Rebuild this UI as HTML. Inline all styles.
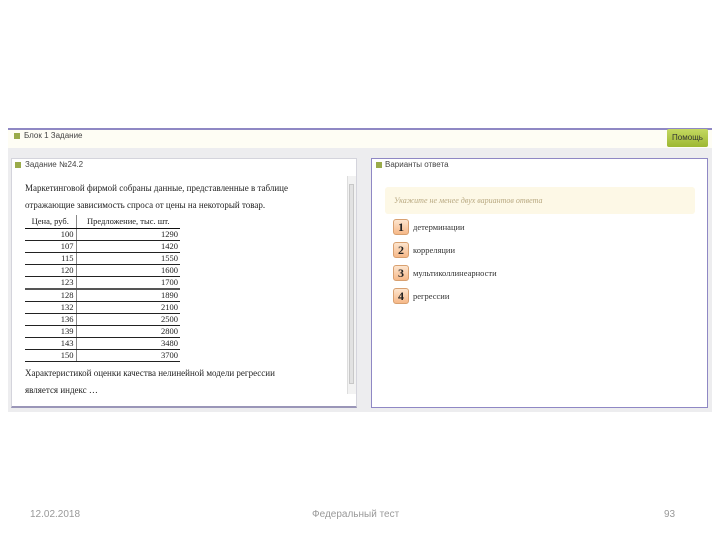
<!DOCTYPE html>
<html><head><meta charset="utf-8"><style>
*{margin:0;padding:0;box-sizing:border-box}
body{width:720px;height:540px;background:#fff;position:relative;overflow:hidden;font-family:"Liberation Serif",serif;color:#222}
.abs{position:absolute}
.sq{position:absolute;width:6px;height:6px;background:#9aab4a}
.lbl{font-family:"Liberation Sans",sans-serif;font-size:8px;color:#444}
table{border-collapse:collapse;font-size:8.5px;table-layout:fixed}
td{height:12px;text-align:right;padding:0 2px;border-bottom:1px solid #222;line-height:11px;overflow:hidden;white-space:nowrap}
.num{position:absolute;width:16px;height:16px;border:1px solid #d8a070;border-radius:3px;background:linear-gradient(#fde5cf,#f6b888);font-weight:bold;font-size:12px;text-align:center;line-height:15px}
.opt{position:absolute;font-size:8.5px;color:#333}
</style></head><body>
<div class="abs" style="left:8px;top:128px;width:704px;height:284px;background:#ededef"></div>
<div class="abs" style="left:8px;top:128px;width:704px;height:20px;background:#fefdf4;border-top:2px solid #8f88c4"></div>
<div class="sq" style="left:14px;top:133px"></div>
<div class="abs lbl" style="left:24px;top:131px">Блок 1 Задание</div>
<div class="abs" style="left:667px;top:129px;width:41px;height:18px;background:linear-gradient(#c4d860,#9db832);border-radius:2px;font-family:'Liberation Sans',sans-serif;font-size:8px;text-align:center;line-height:18px;color:#333">Помощь</div>

<div class="abs" style="left:11px;top:158px;width:346px;height:250px;background:#fff;border:1px solid #d4d4dc;border-bottom:2px solid #9a96b8"></div>
<div class="sq" style="left:15px;top:162px"></div>
<div class="abs lbl" style="left:25px;top:160px">Задание №24.2</div>
<div class="abs" style="left:347px;top:176px;width:9px;height:218px;background:#f2f2f2;border-left:1px solid #ddd"></div>
<div class="abs" style="left:349px;top:184px;width:5px;height:200px;background:#e2e2e2;border:1px solid #c8c8c8"></div>
<div class="abs" style="left:25px;top:180px;font-size:9px;line-height:17px;width:320px">Маркетинговой фирмой собраны данные, представленные в таблице<br>отражающие зависимость спроса от цены на некоторый товар.</div>
<table class="abs" style="left:25px;top:215px;width:155px">
<tr><td style="text-align:center;width:51px;height:13px;border-right:1px solid #888;border-bottom:1.5px solid #111">Цена, руб.</td><td style="text-align:center;border-bottom:1.5px solid #111">Предложение, тыс. шт.</td></tr>
<tr><td style="border-right:1px solid #888">100</td><td>1290</td></tr>
<tr><td style="border-right:1px solid #888">107</td><td>1420</td></tr>
<tr><td style="border-right:1px solid #888">115</td><td>1550</td></tr>
<tr><td style="border-right:1px solid #888">120</td><td>1600</td></tr>
<tr><td style="border-right:1px solid #888;border-bottom:2px solid #555">123</td><td style="border-bottom:2px solid #555">1700</td></tr>
<tr><td style="border-right:1px solid #888">128</td><td>1890</td></tr>
<tr><td style="border-right:1px solid #888">132</td><td>2100</td></tr>
<tr><td style="border-right:1px solid #888">136</td><td>2500</td></tr>
<tr><td style="border-right:1px solid #888">139</td><td>2800</td></tr>
<tr><td style="border-right:1px solid #888">143</td><td>3480</td></tr>
<tr><td style="border-right:1px solid #888">150</td><td>3700</td></tr>
</table>
<div class="abs" style="left:25px;top:365px;font-size:9px;line-height:17px;width:320px">Характеристикой оценки качества нелинейной модели регрессии<br>является индекс …</div>

<div class="abs" style="left:371px;top:158px;width:337px;height:250px;background:#fff;border:1px solid #8f88c4"></div>
<div class="sq" style="left:376px;top:162px"></div>
<div class="abs lbl" style="left:385px;top:160px">Варианты ответа</div>
<div class="abs" style="left:385px;top:187px;width:310px;height:27px;background:#fdf8e6;border-radius:3px"></div>
<div class="abs" style="left:394px;top:196px;font-size:8px;font-style:italic;color:#b8a880">Укажите не менее двух вариантов ответа</div>
<div class="num" style="left:393px;top:219px">1</div><div class="opt" style="left:413px;top:222px">детерминации</div>
<div class="num" style="left:393px;top:242px">2</div><div class="opt" style="left:413px;top:245px">корреляции</div>
<div class="num" style="left:393px;top:265px">3</div><div class="opt" style="left:413px;top:268px">мультиколлинеарности</div>
<div class="num" style="left:393px;top:288px">4</div><div class="opt" style="left:413px;top:291px">регрессии</div>

<div class="abs" style="left:30px;top:509px;font-family:'Liberation Sans',sans-serif;font-size:10px;color:#999">12.02.2018</div>
<div class="abs" style="left:312px;top:509px;font-family:'Liberation Sans',sans-serif;font-size:10px;color:#999">Федеральный тест</div>
<div class="abs" style="left:664px;top:509px;font-family:'Liberation Sans',sans-serif;font-size:10px;color:#999">93</div>
</body></html>
